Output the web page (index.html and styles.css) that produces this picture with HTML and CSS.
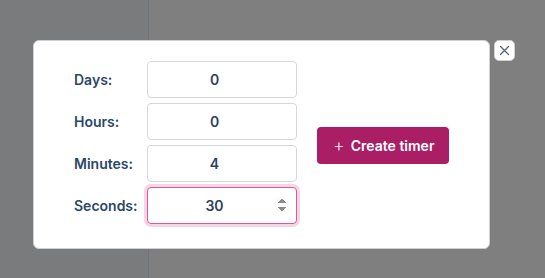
FILE: index.html
```html
<!DOCTYPE html>
<html lang="en">
<head>
  <meta charset="UTF-8" />
  <meta name="viewport" content="width=device-width, initial-scale=1.0" />
  <title>Timer</title>
  <link rel="stylesheet" href="styles.css">
</head>
<body>
  <div class="page">
    <aside class="sidebar"></aside>
    <main class="main"></main>
  </div>

  <div class="modal">
    <form class="timer-form" onsubmit="return false;">
      <div class="fields">
        <label for="days">Days:</label>
        <input type="number" id="days" value="0">
        <label for="hours">Hours:</label>
        <input type="number" id="hours" value="0">
        <label for="minutes">Minutes:</label>
        <input type="number" id="minutes" value="4">
        <label for="seconds">Seconds:</label>
        <input type="number" id="seconds" class="active" value="30" autofocus>
      </div>
      <button type="submit" class="create-btn"><span class="plus">+</span> Create timer</button>
    </form>
  </div>
  <button class="close-btn" aria-label="Close">
    <svg width="11" height="11" viewBox="0 0 11 11"><path d="M1.5 1.5 L9.5 9.5 M9.5 1.5 L1.5 9.5" stroke="#5b6478" stroke-width="1.3" stroke-linecap="round"/></svg>
  </button>
</body>
</html>
```

FILE: styles.css
```css
body {
  margin: 0;
  font-family: Inter, "Liberation Sans", sans-serif;
  background: #7f7f7f;
}
.page {
  display: flex;
  height: 100vh;
}
.sidebar {
  width: 148px;
  background: #7a7b7d;
  border-right: 1px solid #737477;
}
.main {
  flex: 1;
  background: #7f7f7f;
}

.modal {
  position: fixed;
  left: 33px;
  top: 40px;
  width: 457px;
  box-sizing: border-box;
  padding: 20px 39px 24px 40px;
  background: #fff;
  border: 1px solid #cfd0d6;
  border-radius: 6px;
}
.timer-form {
  display: flex;
  align-items: center;
  gap: 20px;
}
.fields {
  display: grid;
  grid-template-columns: 73px 150px;
  row-gap: 5px;
  align-items: center;
}
.fields label {
  font-size: 14px;
  font-weight: 600;
  color: #2c4768;
}
.fields input {
  box-sizing: border-box;
  width: 150px;
  height: 37px;
  margin: 0;
  padding: 0 6px;
  font-family: Inter, "Liberation Sans", sans-serif;
  font-size: 14px;
  font-weight: 600;
  color: #2d4263;
  text-align: center;
  background: #fff;
  border: 1px solid #d6d6e0;
  border-radius: 4px;
  outline: none;
}
.fields input:focus,
.fields input.active {
  border-color: #e0569b;
  box-shadow: 0 0 0 3px #f4d6e5;
}
.fields input.active::-webkit-inner-spin-button {
  opacity: 1;
}

.create-btn {
  margin-top: 6px;
  display: inline-flex;
  align-items: center;
  gap: 6px;
  height: 37px;
  padding: 0 15px 0 16px;
  font-family: Inter, "Liberation Sans", sans-serif;
  font-size: 14px;
  font-weight: 600;
  color: #fff;
  background: #a91e64;
  border: none;
  border-radius: 4px;
  cursor: pointer;
}
.create-btn .plus {
  font-size: 18px;
  font-weight: 300;
  line-height: 1;
  color: #f3d9e6;
}

.close-btn {
  position: fixed;
  left: 494px;
  top: 40px;
  width: 21px;
  height: 21px;
  padding: 0;
  display: flex;
  align-items: center;
  justify-content: center;
  background: #fff;
  border: 1px solid #cfd0d6;
  border-radius: 5px;
  cursor: pointer;
}
```
